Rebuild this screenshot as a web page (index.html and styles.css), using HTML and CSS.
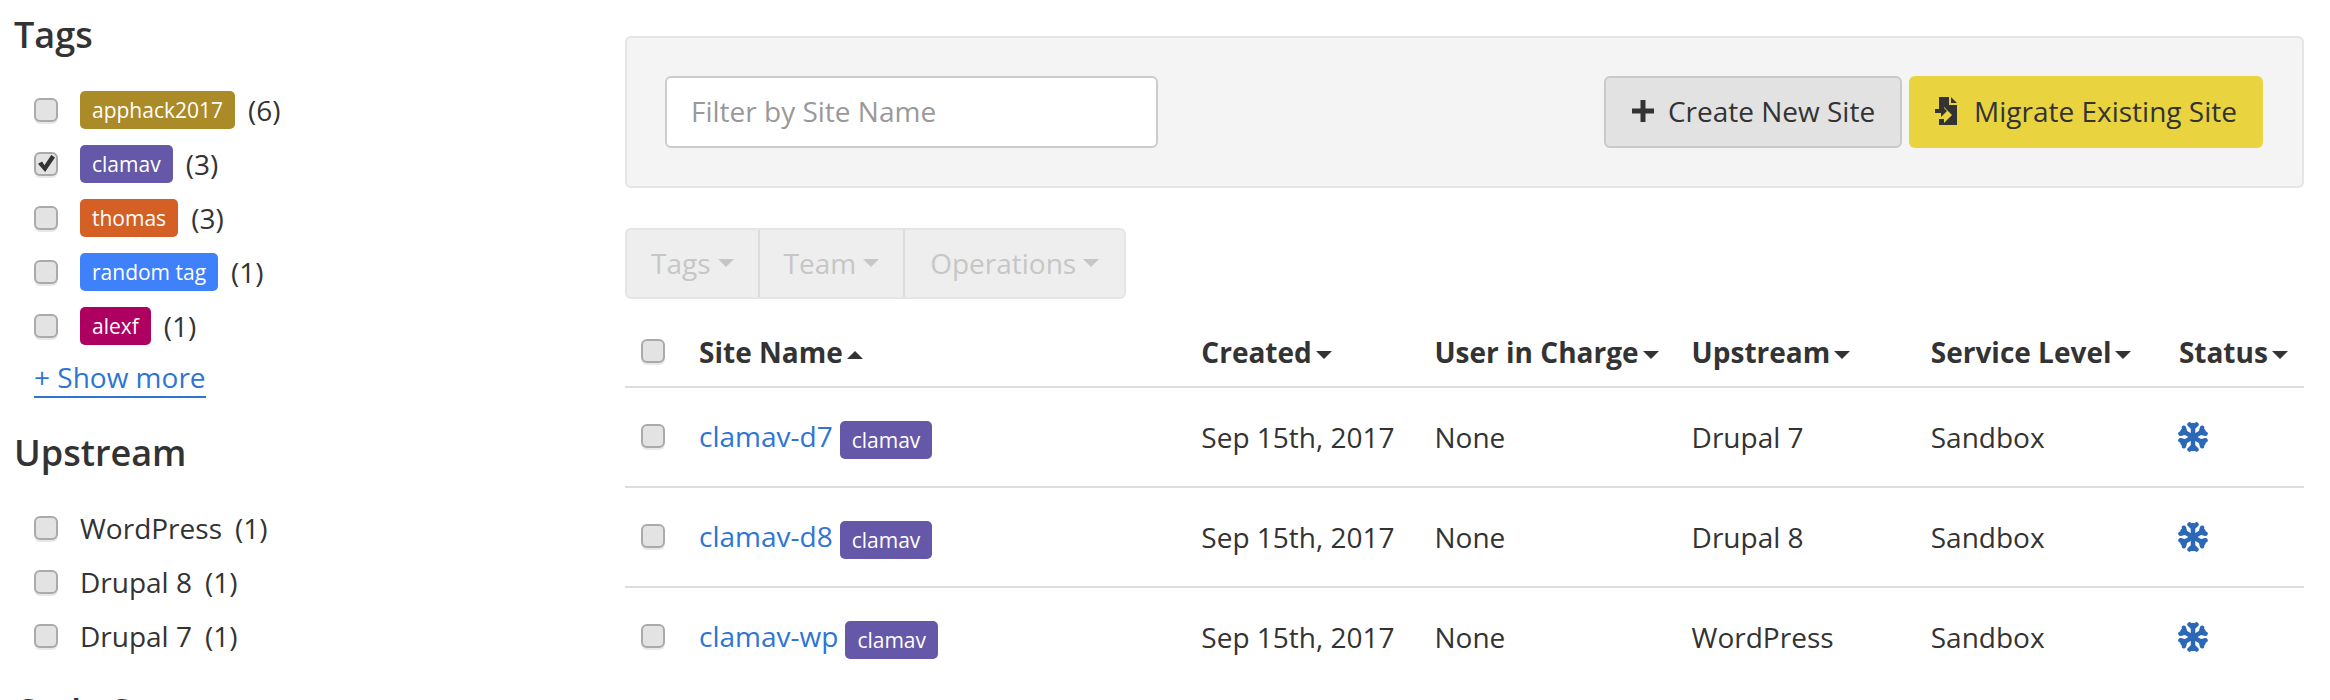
FILE: index.html
```html
<!DOCTYPE html>
<html lang="en">
  <head>
    <meta charset="UTF-8" />
    <title>Sites</title>
    <link rel="stylesheet" href="styles.css">
  </head>
  <body>
    <svg class="defs" aria-hidden="true">
      <symbol id="snowflake" viewBox="0 0 30 30">
        <g fill="none" stroke="currentColor" stroke-width="4.500" stroke-linecap="round" stroke-linejoin="round">
          <path d="M15 15V3M11.500 2.500 15 6l3.500-3.500" />
          <path d="M15 15V3M11.500 2.500 15 6l3.500-3.500" transform="rotate(60 15 15)" />
          <path d="M15 15V3M11.500 2.500 15 6l3.500-3.500" transform="rotate(120 15 15)" />
          <path d="M15 15V3M11.500 2.500 15 6l3.500-3.500" transform="rotate(180 15 15)" />
          <path d="M15 15V3M11.500 2.500 15 6l3.500-3.500" transform="rotate(240 15 15)" />
          <path d="M15 15V3M11.500 2.500 15 6l3.500-3.500" transform="rotate(300 15 15)" />
        </g>
      </symbol>
    </svg>

    <div class="page">
      <aside class="sidebar">
        <h2>Tags</h2>
        <ul class="filterList">
          <li><input type="checkbox" /><span class="tag tagGold">apphack2017</span><span>(6)</span></li>
          <li><input type="checkbox" checked /><span class="tag tagPurple">clamav</span><span>(3)</span></li>
          <li><input type="checkbox" /><span class="tag tagOrange">thomas</span><span>(3)</span></li>
          <li><input type="checkbox" /><span class="tag tagBlue">random tag</span><span>(1)</span></li>
          <li><input type="checkbox" /><span class="tag tagPink">alexf</span><span>(1)</span></li>
        </ul>
        <a class="showMore" href="#">+ Show more</a>

        <h2 class="nextHeading">Upstream</h2>
        <ul class="filterList">
          <li><input type="checkbox" /><span class="plainName">WordPress</span><span>(1)</span></li>
          <li><input type="checkbox" /><span class="plainName">Drupal 8</span><span>(1)</span></li>
          <li><input type="checkbox" /><span class="plainName">Drupal 7</span><span>(1)</span></li>
        </ul>

        <h2 class="lastHeading">Code Status</h2>
      </aside>

      <main class="content">
        <div class="toolbar">
          <input class="siteFilter" type="text" placeholder="Filter by Site Name" />
          <div class="toolbarButtons">
            <button class="btn btnCreate">
              <svg class="btnIcon" viewBox="0 0 24 24"><path d="M9.500 1h5v8.500H23v5h-8.500V23h-5v-8.500H1v-5h8.500z" fill="currentColor" /></svg>
              Create New Site
            </button>
            <button class="btn btnMigrate">
              <svg class="btnIcon migrateIcon" viewBox="0 0 24 28">
                <path d="M4 0h10v8h8v20H4v-6h5v4l8-8-8-8v4H4z" fill="currentColor" />
                <path d="M16 0l6 6h-6zM0 12h6v-4l6 6-6 6v-4H0z" fill="currentColor" />
              </svg>
              Migrate Existing Site
            </button>
          </div>
        </div>

        <div class="btnGroup">
          <span class="groupItem">Tags<i class="caret"></i></span>
          <span class="groupItem">Team<i class="caret"></i></span>
          <span class="groupItem">Operations<i class="caret"></i></span>
        </div>

        <table class="sitesTable">
          <colgroup>
            <col class="colCheck" />
            <col class="colName" />
            <col class="colCreated" />
            <col class="colUser" />
            <col class="colUpstream" />
            <col class="colLevel" />
            <col class="colStatus" />
          </colgroup>
          <thead>
            <tr>
              <th><input type="checkbox" /></th>
              <th>Site Name<i class="caret caretUp"></i></th>
              <th>Created<i class="caret"></i></th>
              <th>User in Charge<i class="caret"></i></th>
              <th>Upstream<i class="caret"></i></th>
              <th>Service Level<i class="caret"></i></th>
              <th>Status<i class="caret"></i></th>
            </tr>
          </thead>
          <tbody>
            <tr>
              <td><input type="checkbox" /></td>
              <td><a href="#">clamav-d7</a><span class="tag tagPurple">clamav</span></td>
              <td>Sep 15th, 2017</td>
              <td>None</td>
              <td>Drupal 7</td>
              <td>Sandbox</td>
              <td><svg class="statusIcon"><use href="#snowflake" /></svg></td>
            </tr>
            <tr>
              <td><input type="checkbox" /></td>
              <td><a href="#">clamav-d8</a><span class="tag tagPurple">clamav</span></td>
              <td>Sep 15th, 2017</td>
              <td>None</td>
              <td>Drupal 8</td>
              <td>Sandbox</td>
              <td><svg class="statusIcon"><use href="#snowflake" /></svg></td>
            </tr>
            <tr>
              <td><input type="checkbox" /></td>
              <td><a href="#">clamav-wp</a><span class="tag tagPurple">clamav</span></td>
              <td>Sep 15th, 2017</td>
              <td>None</td>
              <td>WordPress</td>
              <td>Sandbox</td>
              <td><svg class="statusIcon"><use href="#snowflake" /></svg></td>
            </tr>
          </tbody>
        </table>
      </main>
    </div>
  </body>
</html>
```

FILE: styles.css
```css
html,
body {
  height: 700px;
  overflow: hidden;
}
body {
  font-family: "Open Sans", "Liberation Sans", sans-serif;
  font-size: 28px;
  line-height: 40px;
  color: #333;
  background-color: #fff;
  margin: 0;
}

.defs {
  display: none;
}

.page {
  display: flex;
  padding: 0 26px 0 14px;
}

/* Checkboxes */
input[type="checkbox"] {
  appearance: none;
  position: relative;
  flex: none;
  display: block;
  width: 24px;
  height: 24px;
  margin: 0;
  background-color: #e3e3e3;
  border: 2px solid #aaa;
  border-radius: 6px;
  box-shadow: 0 2px 0 #e8e8e8;
}
input[type="checkbox"]:checked::before {
  content: "";
  position: absolute;
  inset: 1px 1px 2px 2px;
  background-color: #333;
  clip-path: polygon(0 52%, 24% 38%, 38% 60%, 78% 0, 100% 14%, 42% 100%);
}

/* Sidebar */
.sidebar {
  width: 611px;
  flex: none;
}
h2 {
  font-size: 36px;
  line-height: 40px;
  font-weight: 600;
  margin: 15px 0 0;
}
.filterList {
  list-style: none;
  margin: 28px 0 0;
  padding: 0 0 0 20px;
}
.filterList li {
  display: flex;
  align-items: center;
  height: 54px;
  gap: 13px;
}
.filterList input {
  margin-right: 9px;
}
.showMore {
  display: inline-block;
  margin: 5px 0 0 20px;
  line-height: 38px;
  color: #2e75d4;
  text-decoration: none;
  border-bottom: 2px solid #2e75d4;
}
.nextHeading {
  margin-top: 35px;
}
.filterList + .lastHeading {
  margin-top: 29px;
}

/* Tags */
.tag {
  display: inline-block;
  font-size: 21px;
  line-height: 38px;
  height: 38px;
  padding: 0 12px;
  color: #fff;
  border-radius: 5px;
}
.tagGold {
  background-color: #ab8a28;
}
.tagPurple {
  background-color: #6558a8;
}
.tagOrange {
  background-color: #d46025;
}
.tagBlue {
  background-color: #3f80fb;
}
.tagPink {
  background-color: #ae0060;
}

/* Toolbar */
.content {
  flex: 1;
  padding-top: 36px;
}
.toolbar {
  display: flex;
  align-items: center;
  justify-content: space-between;
  height: 152px;
  box-sizing: border-box;
  padding: 0 39px 0 38px;
  background-color: #f4f4f4;
  border: 2px solid #e5e5e5;
  border-radius: 6px;
}
.siteFilter {
  width: 493px;
  height: 72px;
  box-sizing: border-box;
  padding: 0 24px 2px;
  font-family: inherit;
  font-size: 28px;
  color: #333;
  background-color: #fff;
  border: 2px solid #ccc;
  border-radius: 6px;
}
.siteFilter::placeholder {
  color: #999;
}
.toolbarButtons {
  display: flex;
  gap: 7px;
}
.btn {
  display: flex;
  align-items: center;
  justify-content: center;
  height: 72px;
  box-sizing: border-box;
  padding: 0 0 2px;
  font-family: inherit;
  font-size: 28px;
  color: #333;
  border-radius: 6px;
}
.btnCreate {
  width: 298px;
  gap: 13px;
  background-color: #e2e2e2;
  border: 2px solid #c9c9c9;
}
.btnMigrate {
  width: 354px;
  gap: 15px;
  background-color: #e9d33f;
  border: none;
}
.btnIcon {
  width: 24px;
  height: 24px;
}
.migrateIcon {
  height: 28px;
}

/* Button group */
.btnGroup {
  display: inline-flex;
  margin-top: 40px;
  height: 71px;
  box-sizing: border-box;
  color: #c6c6c6;
  background-color: #eee;
  border: 2px solid #e5e5e5;
  border-radius: 6px;
}
.groupItem {
  display: flex;
  align-items: center;
  padding: 0 24px 2px;
  border-left: 2px solid #dcdcdc;
}
.groupItem:first-child {
  border-left: none;
}
.groupItem:last-child {
  padding-left: 25px;
  padding-right: 25px;
}

/* Carets */
.caret {
  display: inline-block;
  margin-left: 7px;
  border-top: 8px solid currentColor;
  border-left: 8px solid transparent;
  border-right: 8px solid transparent;
}
.caretUp {
  border-top: none;
  border-bottom: 8px solid currentColor;
}
th .caret {
  vertical-align: middle;
  margin-left: 4px;
}

/* Table */
.sitesTable {
  width: 1679px;
  table-layout: fixed;
  border-collapse: collapse;
  margin-top: 18px;
}
.colCheck {
  width: 74px;
}
.colName {
  width: 502px;
}
.colCreated {
  width: 233px;
}
.colUser {
  width: 257px;
}
.colUpstream {
  width: 239px;
}
.colLevel {
  width: 248px;
}
.colStatus {
  width: 125px;
}
.sitesTable th,
.sitesTable td {
  padding: 0;
  text-align: left;
  white-space: nowrap;
  border-bottom: 2px solid #ddd;
}
.sitesTable th {
  height: 69px;
  font-weight: 700;
  font-size: 28px;
}
.sitesTable td {
  height: 98px;
}
.sitesTable tbody tr:last-child td {
  border-bottom: none;
}
.sitesTable th:first-child,
.sitesTable td:first-child {
  padding-left: 16px;
}
.sitesTable th input {
  margin-bottom: 2px;
}
.sitesTable td input {
  margin-bottom: 3px;
}
.sitesTable a {
  color: #2e75d4;
  text-decoration: none;
}
.sitesTable .tag {
  margin-left: 7px;
  vertical-align: -1px;
}
.statusIcon {
  display: block;
  width: 30px;
  height: 30px;
  margin: 0 0 0 -1px;
  color: #2c68b8;
}
```
